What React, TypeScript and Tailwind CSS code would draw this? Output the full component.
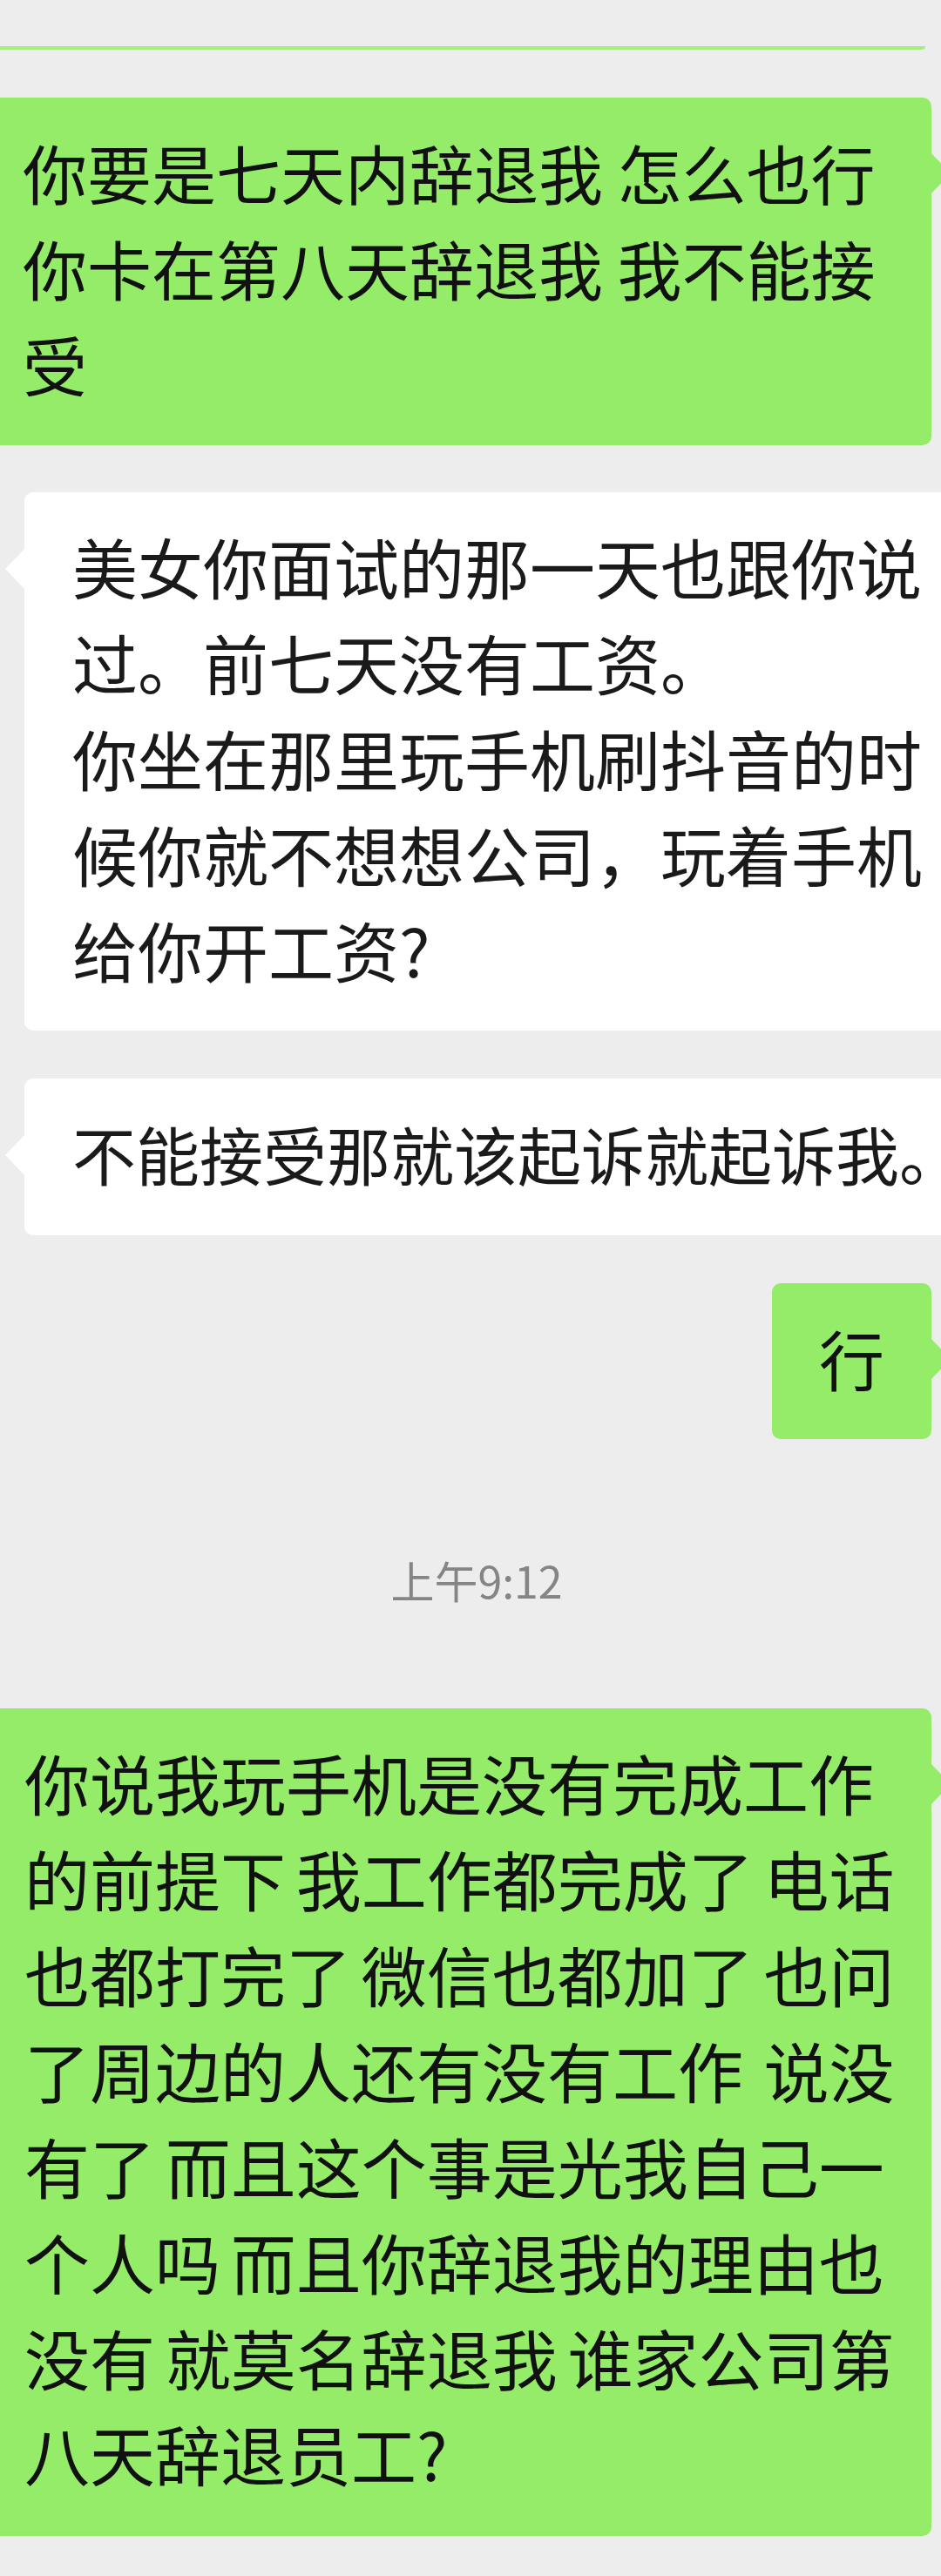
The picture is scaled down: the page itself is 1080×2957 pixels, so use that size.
import React from 'react';

type Side = 'left' | 'right';

const FONT = "font-['Noto_Sans_CJK_SC','Noto_Sans',sans-serif]";

// green bubble (mine) on the right, white bubble (theirs) on the left
const Bubble: React.FC<{
  side: Side;
  lines: string[];
  className?: string;
  textClass?: string;
}> = ({ side, lines, className = '', textClass = '' }) => {
  const isMine = side === 'right';
  return (
    <div
      className={`relative shrink-0 rounded-[10px] ${
        isMine ? 'bg-[#95ec69] text-[#111111]' : 'bg-white text-[#1a1a1a]'
      } ${className}`}
    >
      {isMine ? (
        <span className="absolute left-full top-[64px] h-0 w-0 border-y-[23px] border-l-[22px] border-y-transparent border-l-[#95ec69]" />
      ) : (
        <span className="absolute right-full top-[65px] h-0 w-0 border-y-[23px] border-r-[22px] border-y-transparent border-r-white" />
      )}
      <div className={`leading-[110px] ${textClass}`}>
        {lines.map((line, i) => (
          <div key={i} className="whitespace-pre">
            {line}
          </div>
        ))}
      </div>
    </div>
  );
};

export default function App() {
  return (
    <div className={`w-[1080px] min-h-[2957px] overflow-hidden bg-[#ededed] pt-[53px] ${FONT}`}>
      {/* bottom edge of the previous green bubble */}
      <div className="h-[4px] w-[1062px] rounded-br-[4px] bg-[#a3ee7c]" />

      <div className="flex flex-col">
        <Bubble
          side="right"
          className="mt-[55px] -ml-[29px] w-[1098px] pt-[30px] pb-[39px] pl-[55px] pr-[30px]"
          textClass="text-[74px]"
          lines={['你要是七天内辞退我 怎么也行', '你卡在第八天辞退我 我不能接', '受']}
        />

        <Bubble
          side="left"
          className="mt-[54px] ml-[28px] w-[1100px] pt-[30px] pb-[38px] pl-[55px]"
          textClass="text-[75px]"
          lines={[
            '美女你面试的那一天也跟你说',
            '过。前七天没有工资。',
            '你坐在那里玩手机刷抖音的时',
            '候你就不想想公司，玩着手机',
            '给你开工资?',
          ]}
        />

        <Bubble
          side="left"
          className="mt-[55px] ml-[28px] w-[1052px] pt-[30px] pb-[40px] pl-[55px] rounded-r-none"
          textClass="text-[73px]"
          lines={['不能接受那就该起诉就起诉我。']}
        />

        <div className="mt-[55px] flex justify-end pr-[11px]">
          <Bubble
            side="right"
            className="pt-[31px] pb-[38px] px-[54px]"
            textClass="text-[75px]"
            lines={['行']}
          />
        </div>

        <div className="mt-[130px] flex justify-center pl-[14px] text-[50px] leading-[62px] text-[#858585]">
          上午9:12
        </div>

        <Bubble
          side="right"
          className="mt-[117px] -ml-[29px] w-[1098px] pt-[30px] pb-[40px] pl-[57px] pr-[30px]"
          textClass="text-[75px] [word-spacing:-5px]"
          lines={[
            '你说我玩手机是没有完成工作',
            '的前提下 我工作都完成了 电话',
            '也都打完了 微信也都加了 也问',
            '了周边的人还有没有工作  说没',
            '有了 而且这个事是光我自己一',
            '个人吗 而且你辞退我的理由也',
            '没有 就莫名辞退我 谁家公司第',
            '八天辞退员工?',
          ]}
        />
      </div>
    </div>
  );
}
